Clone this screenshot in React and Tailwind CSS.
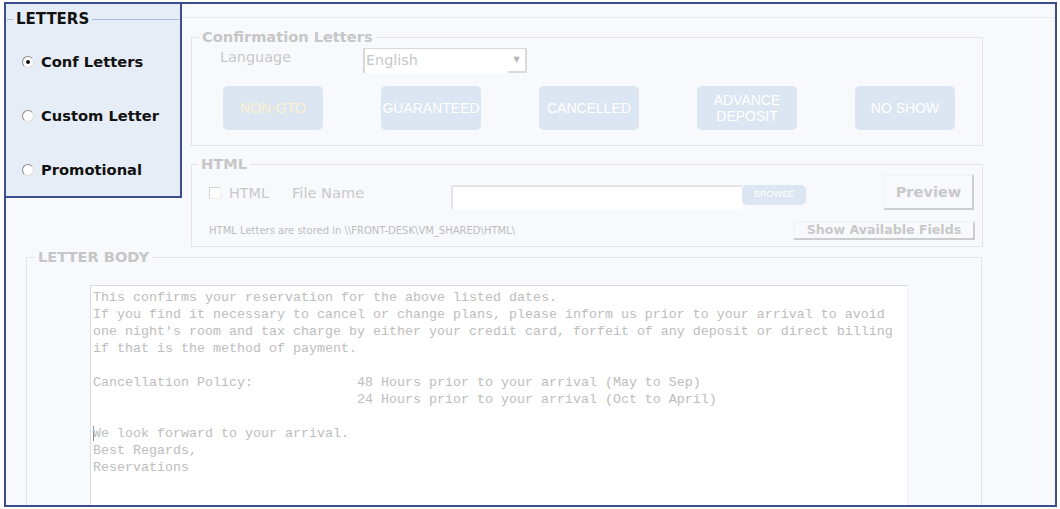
import React from 'react';

const verdana = { fontFamily: '"DejaVu Sans", Verdana, sans-serif' };

// Fieldset with a grey legend sitting on the top border
const Group = ({ title, className = '', legendClass = 'ml-[7px]', children }) => (
  <fieldset className={`shrink-0 border border-[#dfe6f2] ${className}`}>
    <legend className={`${legendClass} px-[3px] text-[14.6px] font-bold leading-[18px] text-[#c6c6c6]`}>{title}</legend>
    {children}
  </fieldset>
);

const Radio = ({ label, checked }) => (
  <div className="flex h-[20px] items-center">
    <span className="flex h-[12px] w-[12px] items-center justify-center rounded-full border border-t-[#8a8a8a] border-l-[#8a8a8a] border-b-[#dcdcdc] border-r-[#dcdcdc] bg-white">
      {checked && <span className="h-[4px] w-[4px] rounded-full bg-[#111]" />}
    </span>
    <span className="ml-[7px] text-[14.7px] font-bold text-[#111]">{label}</span>
  </div>
);

const LetterButton = ({ children, yellow }) => (
  <div
    className={`flex h-[44px] w-[100px] items-center justify-center rounded-[5px] bg-[#dce6f2] text-center text-[14px] leading-[16px] ${yellow ? 'text-[#fbf1cf]' : 'text-white'}`}
    style={{ fontFamily: '"Liberation Sans", Arial, sans-serif' }}
  >
    {children}
  </div>
);

const letterLines = [
  'This confirms your reservation for the above listed dates.',
  'If you find it necessary to cancel or change plans, please inform us prior to your arrival to avoid',
  "one night's room and tax charge by either your credit card, forfeit of any deposit or direct billing",
  'if that is the method of payment.',
  '',
  'Cancellation Policy:             48 Hours prior to your arrival (May to Sep)',
  '                                 24 Hours prior to your arrival (Oct to April)',
  '',
];

export default function App() {
  return (
    <div className="h-[509px] w-[1060px] overflow-hidden bg-white pl-[4px] pt-[2px]" style={verdana}>
      <div className="flex h-[505px] w-[1053px] flex-col overflow-hidden border-2 border-[#3b4e8e] bg-[#f8f9fd]">
        <div className="flex items-start">
          {/* LETTERS panel */}
          <div className="-ml-[2px] -mt-[2px] h-[196px] w-[178px] shrink-0 border-2 border-[#3b4e8e] bg-[#e7edf7]">
            <div className="flex h-[30px] items-center">
              <span className="ml-[1px] h-px w-[6px] bg-[#a9bde0]" />
              <span className="px-[3px] text-[15px] font-bold text-[#111]">LETTERS</span>
              <span className="h-px flex-1 bg-[#a9bde0]" />
            </div>
            <div className="mt-[18px] flex flex-col gap-[34px] pl-[16px]">
              <Radio label="Conf Letters" checked />
              <Radio label="Custom Letter" />
              <Radio label="Promotional" />
            </div>
          </div>

          {/* right column */}
          <div className="flex flex-1 flex-col">
            <div className="h-[14px] border-b border-[#e6ebf5]" />

            <Group title="Confirmation Letters" className="ml-[9px] mt-[10px] h-[118px] w-[792px]">
              <div className="mt-[2px] flex items-start pl-[28px]">
                <span className="w-[143px] text-[14.4px] leading-[18px] text-[#c8c8c8]">Language</span>
                <div className="flex h-[25px] w-[164px] border-l-2 border-t border-[#d9d9d9] bg-white">
                  <span className="flex-1 pl-[1px] text-[14.4px] leading-[23px] text-[#c8c8c8]">English</span>
                  <span className="flex w-[19px] items-center justify-center border-b-2 border-r-2 border-[#dadada] text-[8px] text-[#b5b5b5]">▼</span>
                </div>
              </div>
              <div className="mt-[13px] flex gap-[58px] pl-[31px]">
                <LetterButton yellow>NON-GTO</LetterButton>
                <LetterButton>GUARANTEED</LetterButton>
                <LetterButton>CANCELLED</LetterButton>
                <LetterButton>ADVANCE<br />DEPOSIT</LetterButton>
                <LetterButton>NO SHOW</LetterButton>
              </div>
            </Group>

            <Group title="HTML" className="ml-[9px] mt-[9px] h-[92px] w-[792px]" legendClass="ml-[6px]">
              <div className="flex h-[37px] items-start">
                <span className="ml-[17px] mt-[14px] h-[12px] w-[12px] border border-t-[#d4d4d4] border-l-[#d4d4d4] border-b-[#eeeeee] border-r-[#eeeeee] bg-white" />
                <span className="ml-[8px] mt-[11px] w-[63px] text-[14.4px] leading-[18px] text-[#c8c8c8]">HTML</span>
                <span className="mt-[11px] w-[159px] text-[14.6px] leading-[18px] text-[#c8c8c8]">File Name</span>
                <span className="mt-[12px] h-[24px] w-[291px] border-l-2 border-t-2 border-[#e4e4e4] bg-white" />
                <span
                  className="mt-[12px] flex h-[20px] w-[64px] items-center justify-center rounded-[5px] bg-[#dce6f2] text-[9px] text-white"
                  style={{ fontFamily: '"Liberation Sans", Arial, sans-serif' }}
                >
                  BROWSE
                </span>
                <span className="ml-[77px] mt-[1px] flex h-[36px] w-[91px] items-center justify-center border-2 border-t-[#f3f4f8] border-l-[#f3f4f8] border-b-[#cdcdcd] border-r-[#cdcdcd] text-[14.6px] font-bold text-[#c8c8c8]">
                  Preview
                </span>
              </div>
              <div className="mt-[11px] flex h-[19px] items-center">
                <span className="ml-[17px] text-[10px] text-[#bdbdbd]">HTML Letters are stored in \\FRONT-DESK\VM_SHARED\HTML\</span>
                <span className="ml-auto mr-[7px] flex h-[19px] w-[182px] items-center justify-center border-2 border-t-[#f3f4f8] border-l-[#f3f4f8] border-b-[#cdcdcd] border-r-[#cdcdcd] text-[12.6px] font-bold text-[#c8c8c8]">
                  Show Available Fields
                </span>
              </div>
            </Group>
          </div>
        </div>

        <Group title="LETTER BODY" className="ml-[20px] mt-[1px] h-[300px] w-[956px]" legendClass="ml-[8px]">
          <div
            className="ml-[63px] mt-[19px] h-[240px] w-[818px] whitespace-pre border-l border-t border-r border-[#dcdcdc] border-r-[#efefef] bg-white pl-[2px] pt-[3px] text-[13.33px] leading-[17px] text-[#bdbdbd]"
            style={{ fontFamily: '"Liberation Mono", "Courier New", monospace' }}
          >
            {letterLines.map((line, i) => (
              <div key={i} className="h-[17px]">{line}</div>
            ))}
            <div className="h-[17px]">
              <span className="-mr-px inline-block h-[15px] w-0 border-l border-[#888] align-middle" />
              We look forward to your arrival.
            </div>
            <div className="h-[17px]">Best Regards,</div>
            <div className="h-[17px]">Reservations</div>
          </div>
        </Group>
      </div>
    </div>
  );
}
